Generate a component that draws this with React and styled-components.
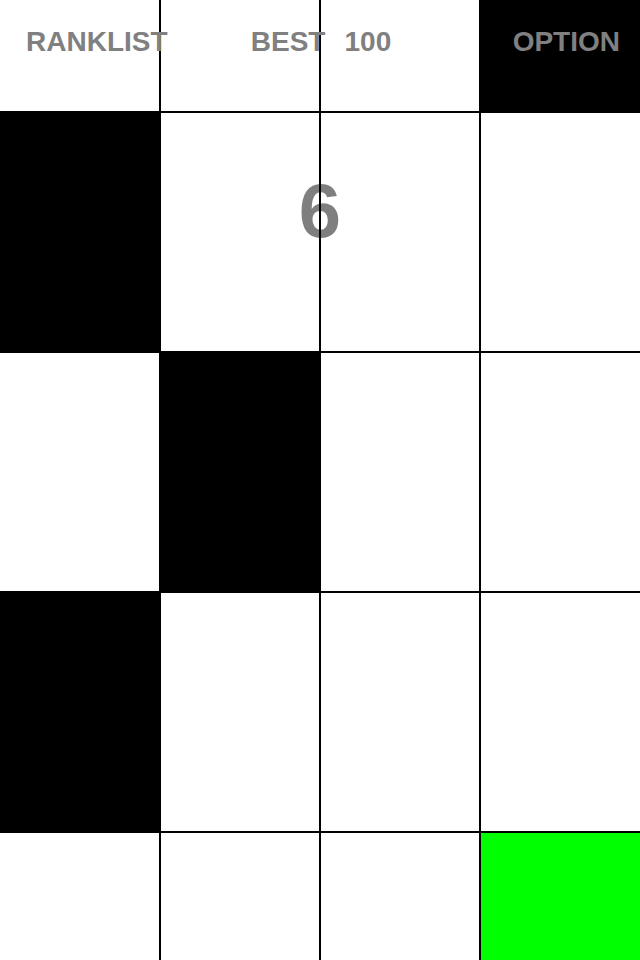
import React from 'react';
import styled, { createGlobalStyle } from 'styled-components';

const GlobalStyle = createGlobalStyle`
  html, body {
    margin: 0;
    padding: 0;
    background: #fff;
  }
  body {
    font-family: "Liberation Sans", Arial, sans-serif;
  }
`;

const Screen = styled.div`
  position: relative;
  width: 640px;
  height: 960px;
  overflow: hidden;
`;

const Board = styled.div`
  display: grid;
  grid-template-columns: 159px 158px 158px 159px;
  grid-template-rows: 111px 238px 238px 238px 127px;
  gap: 2px;
  width: 640px;
  height: 960px;
  background: #000;
`;

const tileColors = {
  white: '#fff',
  black: '#000',
  start: '#00ff00',
};

const Tile = styled.div`
  background: ${(p) => tileColors[p.$kind]};
`;

const Header = styled.div`
  position: absolute;
  top: 28px;
  left: 0;
  right: 0;
  height: 28px;
  display: flex;
  align-items: center;
  justify-content: space-between;
  padding: 0 20px 0 26px;
  font-size: 28px;
  line-height: 28px;
  font-weight: bold;
  color: #808080;
`;

const HeaderButton = styled.span`
  display: block;
`;

const Best = styled.div`
  position: absolute;
  left: 50%;
  transform: translateX(-50%);
  margin-left: 1px;
  display: flex;
  gap: 19px;
`;

const Score = styled.div`
  position: absolute;
  top: 173px;
  left: 0;
  right: 0;
  text-align: center;
  font-size: 76px;
  line-height: 76px;
  font-weight: bold;
  color: rgba(0, 0, 0, 0.5);
`;

const rows = [
  ['white', 'white', 'white', 'black'],
  ['black', 'white', 'white', 'white'],
  ['white', 'black', 'white', 'white'],
  ['black', 'white', 'white', 'white'],
  ['white', 'white', 'white', 'start'],
];

export default function App() {
  return (
    <>
      <GlobalStyle />
      <Screen>
        <Board>
          {rows.map((row, r) =>
            row.map((kind, c) => <Tile key={`${r}-${c}`} $kind={kind} />)
          )}
        </Board>
        <Score>6</Score>
        <Header>
          <HeaderButton>RANKLIST</HeaderButton>
          <Best>
            <span>BEST</span>
            <span>100</span>
          </Best>
          <HeaderButton>OPTION</HeaderButton>
        </Header>
      </Screen>
    </>
  );
}
